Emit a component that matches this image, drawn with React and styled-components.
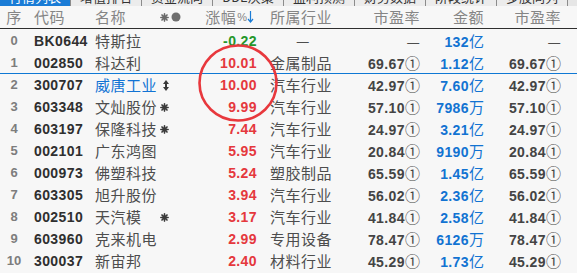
import React from "react";
import styled, { createGlobalStyle } from "styled-components";

const Global = createGlobalStyle`
  html, body { margin: 0; padding: 0; background: #f7f7f7; }
  body { font-family: "Noto Sans CJK SC", "Liberation Sans", sans-serif; }
`;

const CJK = `"Noto Sans CJK SC", "Noto Sans", sans-serif`;
const NUM = `"Liberation Sans", Arial, sans-serif`;

const Page = styled.div`
  position: relative;
  width: 577px;
  height: 273px;
  overflow: hidden;
  background: #f7f7f7;
`;

const TabBar = styled.div`
  display: flex;
  height: 6px;
  overflow: hidden;
  background: #e6e6e6;
`;

const Tab = styled.div`
  flex: 0 0 71px;
  height: 6px;
  overflow: hidden;
  box-sizing: border-box;
  border-right: 1px solid #8c8c8c;
  background: ${(p) => (p.$active ? "#1a7cd6" : "#ececec")};
  color: ${(p) => (p.$active ? "#ffffff" : "#333333")};
  font-family: ${CJK};
  font-size: 13px;
  line-height: 14px;
  text-align: center;
  white-space: nowrap;
`;

const TabLabel = styled.div`
  margin-top: -10px;
`;

const cols = "28px 67px 65px 30px 67px 79px 84px 64px 77px 1fr";

const Header = styled.div`
  display: grid;
  grid-template-columns: ${cols};
  height: 22px;
  align-items: center;
  border-bottom: 1px solid #2e2e2e;
  color: #858585;
  font-family: ${CJK};
  font-size: 15px;
  letter-spacing: 0.5px;
`;

const HCell = styled.div`
  padding-left: ${(p) => p.$pl || 0}px;
  white-space: nowrap;
  line-height: 22px;
  display: flex;
  align-items: center;
  justify-content: ${(p) =>
    p.$align === "right" ? "flex-end" : p.$align === "center" ? "center" : "flex-start"};
`;

const Pct = styled.span`
  font-family: ${NUM};
  font-size: 11px;
  letter-spacing: 0;
  margin-left: 1px;
`;

const Row = styled.div`
  display: grid;
  grid-template-columns: ${cols};
  height: 22px;
  align-items: center;
  box-shadow: ${(p) => (p.$selected ? "inset 0 1px 0 #0f78d4" : "none")};
`;

const Cell = styled.div`
  padding-left: ${(p) => p.$pl || 0}px;
  white-space: nowrap;
  line-height: 22px;
`;

const Idx = styled(Cell)`
  font-family: ${NUM};
  font-weight: bold;
  font-size: 13px;
  color: #7d7d7d;
  text-align: center;
`;

const Code = styled(Cell)`
  font-family: ${NUM};
  font-weight: bold;
  font-size: 14px;
  letter-spacing: 0.4px;
  color: #2f2f2f;
  padding-left: 6px;
`;

const Name = styled(Cell)`
  font-family: ${CJK};
  font-size: 15px;
  letter-spacing: 0.5px;
  color: ${(p) => (p.$selected ? "#1173d4" : "#4d4d4d")};
`;

const Mark = styled(Cell)`
  display: flex;
  align-items: center;
  height: 22px;
`;

const Change = styled(Cell)`
  font-family: ${NUM};
  font-weight: bold;
  font-size: 14px;
  letter-spacing: 0.4px;
  text-align: right;
  color: ${(p) => (p.$down ? "#24962a" : "#e5383d")};
`;

const Industry = styled(Cell)`
  display: flex;
  justify-content: ${(p) => (p.$dash ? "center" : "flex-start")};
  font-family: ${CJK};
  font-size: 15px;
  letter-spacing: 0.5px;
  color: #4d4d4d;
  padding-left: 13px;
`;

const Num = styled(Cell)`
  text-align: right;
  color: ${(p) => p.$color || "#444444"};
`;

const Digits = styled.span`
  font-family: ${NUM};
  font-weight: bold;
  font-size: 14px;
  letter-spacing: 0.4px;
`;

const Unit = styled.span`
  font-family: ${CJK};
  font-size: 15px;
`;

const Dash = styled.span`
  font-family: ${CJK};
  font-size: 15px;
  color: #4d4d4d;
`;

const Circle = styled.svg`
  position: absolute;
  left: 197px;
  top: 43px;
  pointer-events: none;
`;

const Star = ({ color = "#3a3a3a", size = 9 }) => (
  <svg width={size} height={size} viewBox="0 0 10 10">
    <g stroke={color} strokeWidth="1.8" strokeLinecap="round">
      <line x1="5" y1="1" x2="5" y2="9" />
      <line x1="1" y1="5" x2="9" y2="5" />
      <line x1="2.2" y1="2.2" x2="7.8" y2="7.8" />
      <line x1="7.8" y1="2.2" x2="2.2" y2="7.8" />
    </g>
    <circle cx="5" cy="5" r="2.4" fill={color} />
  </svg>
);

const UpDown = () => (
  <svg width="6" height="11" viewBox="0 0 6 11">
    <polygon points="3,0 6,4 0,4" fill="#3a3a3a" />
    <rect x="2" y="4" width="2" height="3" fill="#3a3a3a" />
    <polygon points="3,11 6,7 0,7" fill="#3a3a3a" />
  </svg>
);

const tabs = ["行情列表", "增值排名", "资金流向", "DDE决策", "盈利预测", "财务数据", "阶段统计", "多股同列"];

const rows = [
  { i: 0, code: "BK0644", name: "特斯拉", pct: "-0.22", ind: "", pe: null, amt: "132", unit: "亿" },
  { i: 1, code: "002850", name: "科达利", pct: "10.01", ind: "金属制品", pe: "69.67", amt: "1.12", unit: "亿" },
  { i: 2, code: "300707", name: "威唐工业", mark: "ud", sel: true, pct: "10.00", ind: "汽车行业", pe: "42.97", amt: "7.60", unit: "亿" },
  { i: 3, code: "603348", name: "文灿股份", mark: "star", pct: "9.99", ind: "汽车行业", pe: "57.10", amt: "7986", unit: "万" },
  { i: 4, code: "603197", name: "保隆科技", mark: "star", pct: "7.44", ind: "汽车行业", pe: "24.97", amt: "3.21", unit: "亿" },
  { i: 5, code: "002101", name: "广东鸿图", pct: "5.95", ind: "汽车行业", pe: "20.84", amt: "9190", unit: "万" },
  { i: 6, code: "000973", name: "佛塑科技", pct: "5.24", ind: "塑胶制品", pe: "65.59", amt: "1.45", unit: "亿" },
  { i: 7, code: "603305", name: "旭升股份", pct: "3.94", ind: "汽车行业", pe: "56.02", amt: "2.36", unit: "亿" },
  { i: 8, code: "002510", name: "天汽模", mark: "star", pct: "3.17", ind: "汽车行业", pe: "41.84", amt: "2.58", unit: "亿" },
  { i: 9, code: "603960", name: "克来机电", pct: "2.99", ind: "专用设备", pe: "78.47", amt: "6126", unit: "万" },
  { i: 10, code: "300037", name: "新宙邦", pct: "2.40", ind: "材料行业", pe: "45.29", amt: "1.73", unit: "亿" },
];

const PE = ({ v }) =>
  v ? (
    <>
      <Digits>{v}</Digits>
      <Unit>①</Unit>
    </>
  ) : (
    <Dash>—</Dash>
  );

export default function App() {
  return (
    <Page>
      <Global />
      <TabBar>
        {tabs.map((t, k) => (
          <Tab key={t} $active={k === 0}>
            <TabLabel>{t}</TabLabel>
          </Tab>
        ))}
      </TabBar>
      <Header>
        <HCell $align="center">序</HCell>
        <HCell $pl={6}>代码</HCell>
        <HCell>名称</HCell>
        <HCell>
          <Star color="#6a6a6a" size={9} />
          <svg width="12" height="10" viewBox="0 0 12 10" style={{ marginLeft: 1 }}>
            <circle cx="6" cy="5" r="4.5" fill="#6f6f6f" />
          </svg>
        </HCell>
        <HCell $align="right">
          涨幅<Pct>%</Pct>
          <svg width="7" height="12" viewBox="0 0 7 12" style={{ marginRight: 3 }}>
            <line x1="3.5" y1="0" x2="3.5" y2="11" stroke="#1a7cd6" strokeWidth="1.2" />
            <polyline points="1,8 3.5,11 6,8" fill="none" stroke="#1a7cd6" strokeWidth="1.2" />
          </svg>
        </HCell>
        <HCell $pl={13}>所属行业</HCell>
        <HCell $align="right">市盈率</HCell>
        <HCell $align="right">金额</HCell>
        <HCell $align="right">市盈率</HCell>
        <HCell />
      </Header>
      {rows.map((r) => (
        <Row key={r.i} $selected={r.sel}>
          <Idx>{r.i}</Idx>
          <Code>{r.code}</Code>
          <Name $selected={r.sel}>{r.name}</Name>
          <Mark>
            {r.mark === "star" && <Star />}
            {r.mark === "ud" && (
              <span style={{ marginLeft: 3, display: "flex" }}>
                <UpDown />
              </span>
            )}
          </Mark>
          <Change $down={r.pct.startsWith("-")}>{r.pct}</Change>
          {r.ind ? (
            <Industry>{r.ind}</Industry>
          ) : (
            <Industry $dash>
              <Dash>—</Dash>
            </Industry>
          )}
          <Num>
            <PE v={r.pe} />
          </Num>
          <Num $color="#1273d2">
            <Digits>{r.amt}</Digits>
            <Unit>{r.unit}</Unit>
          </Num>
          <Num>
            <PE v={r.pe} />
          </Num>
          <Cell />
        </Row>
      ))}
      <Circle width="82" height="80" viewBox="0 0 82 80">
        <ellipse cx="41" cy="40" rx="38.5" ry="37.5" fill="none" stroke="#e8383d" strokeWidth="2.6" />
      </Circle>
    </Page>
  );
}
